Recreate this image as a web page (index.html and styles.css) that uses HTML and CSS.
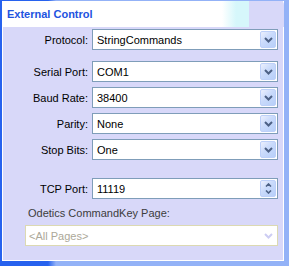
FILE: index.html
```html
<!DOCTYPE html>
<html lang="en">
<head>
    <meta charset="UTF-8">
    <title>External Control</title>
    <link rel="stylesheet" href="styles.css">
</head>
<body>

<div class="window">
    <div class="panel">
        <div class="panelHead">External Control</div>

        <!--connection settings-->
        <div class="settings">
            <div class="row first">
                <span class="label">Protocol:</span>
                <div class="combo">
                    <span class="value">StringCommands</span>
                    <span class="dropBtn"><svg width="9" height="6" viewBox="0 0 9 6"><polyline points="1,1 4.5,4.5 8,1" /></svg></span>
                </div>
            </div>
            <div class="row group">
                <span class="label">Serial Port:</span>
                <div class="combo">
                    <span class="value">COM1</span>
                    <span class="dropBtn"><svg width="9" height="6" viewBox="0 0 9 6"><polyline points="1,1 4.5,4.5 8,1" /></svg></span>
                </div>
            </div>
            <div class="row">
                <span class="label">Baud Rate:</span>
                <div class="combo">
                    <span class="value">38400</span>
                    <span class="dropBtn"><svg width="9" height="6" viewBox="0 0 9 6"><polyline points="1,1 4.5,4.5 8,1" /></svg></span>
                </div>
            </div>
            <div class="row">
                <span class="label">Parity:</span>
                <div class="combo">
                    <span class="value">None</span>
                    <span class="dropBtn"><svg width="9" height="6" viewBox="0 0 9 6"><polyline points="1,1 4.5,4.5 8,1" /></svg></span>
                </div>
            </div>
            <div class="row">
                <span class="label">Stop Bits:</span>
                <div class="combo">
                    <span class="value">One</span>
                    <span class="dropBtn"><svg width="9" height="6" viewBox="0 0 9 6"><polyline points="1,1 4.5,4.5 8,1" /></svg></span>
                </div>
            </div>
            <div class="row tcp">
                <span class="label">TCP Port:</span>
                <div class="combo">
                    <span class="value">11119</span>
                    <span class="dropBtn spin">
                        <svg width="7" height="4" viewBox="0 0 7 4"><polyline points="1,3.5 3.5,1 6,3.5" /></svg>
                        <svg width="7" height="4" viewBox="0 0 7 4"><polyline points="1,0.5 3.5,3 6,0.5" /></svg>
                    </span>
                </div>
            </div>
        </div>

        <!--key page, disabled-->
        <div class="keyPage">
            <div class="keyLabel">Odetics CommandKey Page:</div>
            <div class="combo off">
                <span class="value">&lt;All Pages&gt;</span>
                <span class="dropBtn"><svg width="9" height="6" viewBox="0 0 9 6"><polyline points="1,1 4.5,4.5 8,1" /></svg></span>
            </div>
        </div>
    </div>
</div>

</body>
</html>
```

FILE: styles.css
```css
/*whole page*/
body {
    margin: 0;
    width: 289px;
    height: 266px;
    overflow: hidden;
    font-family: "Liberation Sans", Arial, sans-serif;
    font-size: 11px;
}

/*blue frame round the panel*/
.window {
    box-sizing: border-box;
    height: 266px;
    padding: 1px 5px 5px 2px;
    background: linear-gradient(to right, #2762ee 0, #2762ee 48px, #93b2f7 56px);
}

.panel {
    box-sizing: border-box;
    height: 100%;
    background-color: #d8d8f9;
    border: 1px solid #fff;
    border-top: 0;
}

.panelHead {
    margin: 0 -1px;
    height: 26px;
    line-height: 26px;
    padding-left: 5px;
    font-weight: bold;
    color: #2153e0;
    border-top-right-radius: 4px;
    background: linear-gradient(to right, #fff 0, #fff 78%, #d6f7fb 83%, #d6f7fb 87.5%, #d8d8f9 87.5%);
}

.settings {
    padding-top: 2px;
}

.row {
    display: grid;
    grid-template-columns: 85px 186px;
    column-gap: 4px;
    align-items: center;
    margin-top: 5px;
}

.row.first {
    margin-top: 0;
}

.row.group {
    margin-top: 11px;
}

.row.tcp {
    margin-top: 18px;
}

.label {
    text-align: right;
    color: #000;
}

/*combo box*/
.combo {
    box-sizing: border-box;
    height: 21px;
    display: flex;
    align-items: center;
    border: 1px solid #7f9db9;
    background-color: #fff;
    padding: 0 1px 0 4px;
}

.value {
    flex: 1;
    color: #000;
}

.dropBtn {
    box-sizing: border-box;
    width: 16px;
    height: 17px;
    display: flex;
    flex-direction: column;
    align-items: center;
    justify-content: center;
    border: 1px solid #bdd0f9;
    border-radius: 2px;
    background: linear-gradient(135deg, #ecf0fd 0, #c9dafb 45%, #b7cff9 100%);
}

.dropBtn polyline {
    fill: none;
    stroke: #4d6185;
    stroke-width: 2;
}

.spin {
    gap: 3px;
}

.spin polyline {
    stroke-width: 1.6;
}

/*disabled key page*/
.keyPage {
    padding: 8px 0 0 22px;
    width: 253px;
}

.keyLabel {
    color: #3c3c3c;
    line-height: 13px;
    margin-bottom: 5px;
    padding-left: 3px;
}

.combo.off {
    border-color: #dcd9b2;
    padding-left: 3px;
}

.combo.off .value {
    color: #aca899;
}

.combo.off .dropBtn {
    border-color: transparent;
    background: none;
}

.combo.off polyline {
    stroke: #cdcdf3;
}
```
